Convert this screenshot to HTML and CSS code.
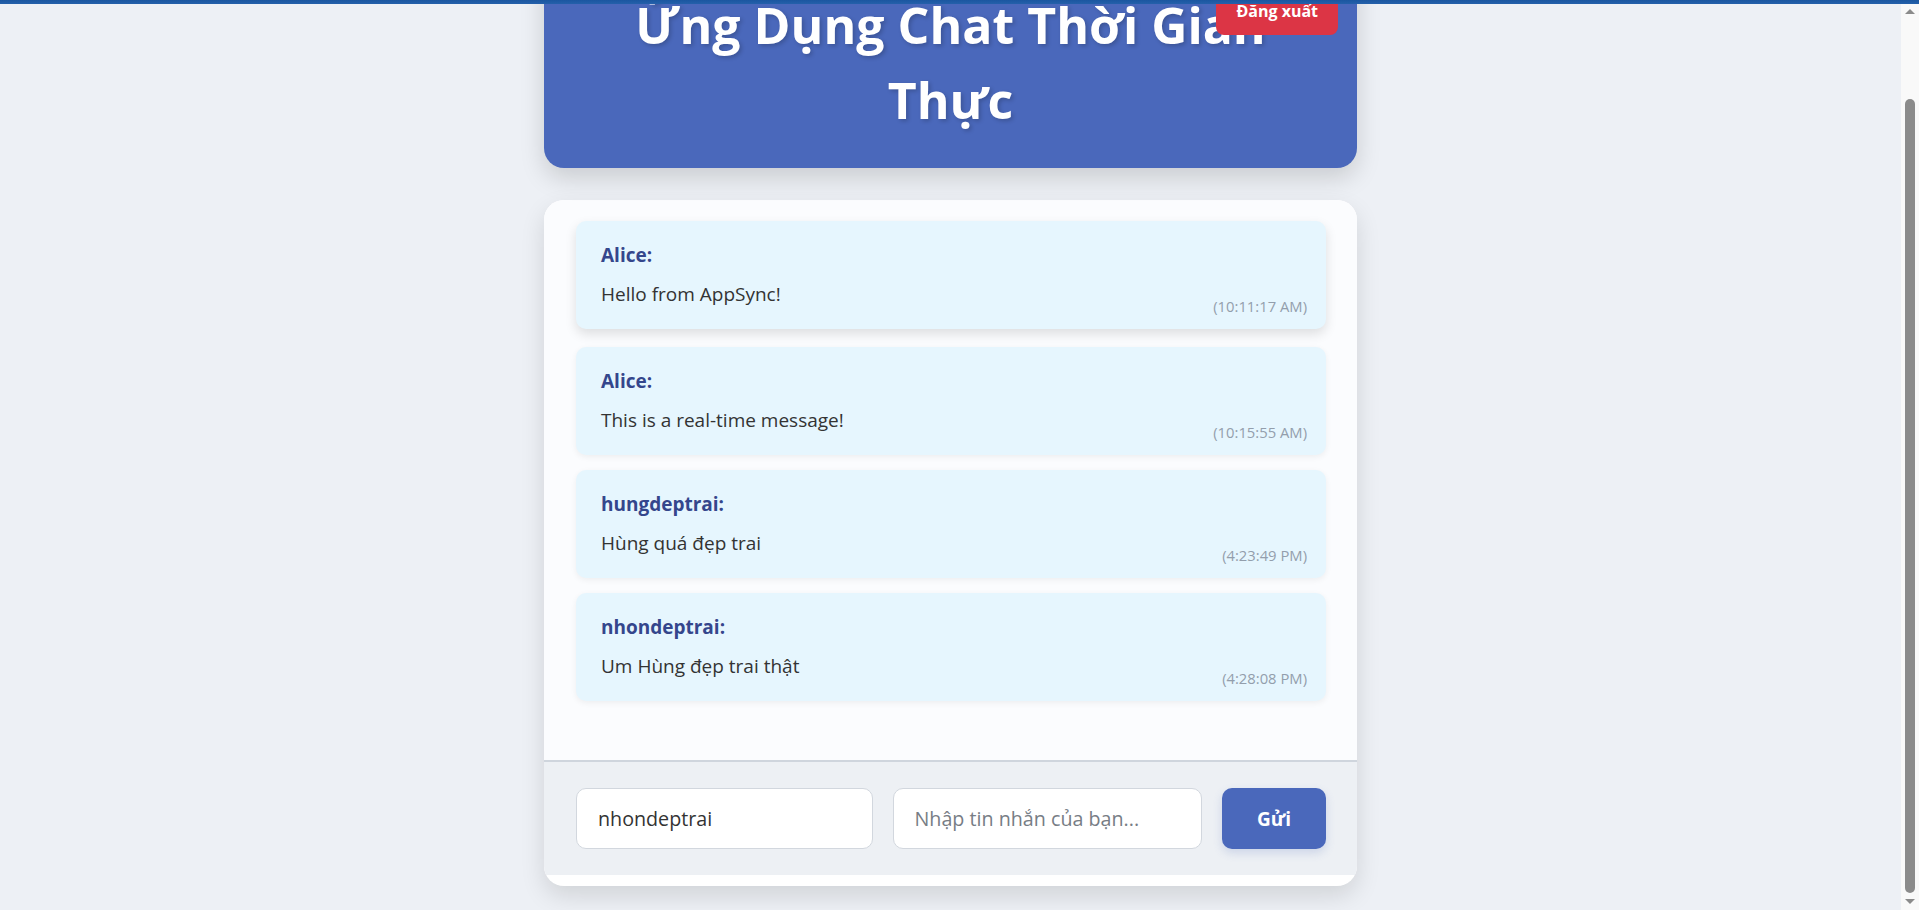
FILE: index.html
```html
<!DOCTYPE html>
<html lang="vi">
<head>
<meta charset="utf-8">
<title>Ứng Dụng Chat Thời Gian Thực</title>
<link rel="stylesheet" href="styles.css">
</head>
<body>
<div class="topbar"></div>
<div class="scrollbar" aria-hidden="true">
  <div class="scrollbar-arrow scrollbar-arrow-up"></div>
  <div class="scrollbar-track"><div class="scrollbar-thumb"></div></div>
  <div class="scrollbar-arrow scrollbar-arrow-down"></div>
</div>
<div class="app">
  <header class="app-header">
    <h1 class="app-title">Ứng Dụng Chat Thời Gian Thực</h1>
    <button class="logout-btn" type="button">Đăng xuất</button>
  </header>
  <main class="chat-card">
    <div class="message-list">
      <div class="message is-hover">
        <strong class="message-author">Alice:</strong>
        <div class="message-row">
          <p class="message-text">Hello from AppSync!</p>
          <span class="message-time">(10:11:17 AM)</span>
        </div>
      </div>
      <div class="message">
        <strong class="message-author">Alice:</strong>
        <div class="message-row">
          <p class="message-text">This is a real-time message!</p>
          <span class="message-time">(10:15:55 AM)</span>
        </div>
      </div>
      <div class="message">
        <strong class="message-author">hungdeptrai:</strong>
        <div class="message-row">
          <p class="message-text">Hùng quá đẹp trai</p>
          <span class="message-time">(4:23:49 PM)</span>
        </div>
      </div>
      <div class="message">
        <strong class="message-author">nhondeptrai:</strong>
        <div class="message-row">
          <p class="message-text">Um Hùng đẹp trai thật</p>
          <span class="message-time">(4:28:08 PM)</span>
        </div>
      </div>
    </div>
    <form class="composer">
      <input class="field" type="text" value="nhondeptrai">
      <input class="field" type="text" placeholder="Nhập tin nhắn của bạn...">
      <button class="send-btn" type="button">Gửi</button>
    </form>
  </main>
</div>
<script src="script.js"></script>
</body>
</html>
```

FILE: styles.css
```css
html {
  background: #edf0f5;
  scrollbar-width: none;
}

html::-webkit-scrollbar {
  width: 0;
  height: 0;
}

body {
  margin: 0;
  padding-right: 18px;
  background: #edf0f5;
  font-family: "Open Sans", "Noto Sans", sans-serif;
  color: #333;
}

.topbar {
  position: fixed;
  top: 0;
  left: 0;
  right: 0;
  height: 4px;
  background: linear-gradient(#1a56a0, #2460aa);
  z-index: 10;
}

.scrollbar {
  position: fixed;
  top: 0;
  right: 0;
  bottom: 0;
  width: 18px;
  background: #f9f9f9;
  display: flex;
  flex-direction: column;
  z-index: 5;
}

.scrollbar-arrow {
  height: 17px;
  display: flex;
  align-items: center;
  justify-content: center;
}

.scrollbar-arrow::before {
  content: "";
  width: 0;
  height: 0;
  border-left: 5px solid transparent;
  border-right: 5px solid transparent;
}

.scrollbar-arrow-up {
  padding-top: 3px;
}

.scrollbar-arrow-up::before {
  border-bottom: 5px solid #8b8b8b;
}

.scrollbar-arrow-down::before {
  border-top: 5px solid #8b8b8b;
}

.scrollbar-track {
  flex: 1;
  display: flex;
  flex-direction: column;
  align-items: center;
  padding-top: 79px;
}

.scrollbar-thumb {
  flex: 1;
  width: 10px;
  border-radius: 5px;
  background: #8b8b8b;
}

.app {
  width: 813px;
  margin: 0 auto;
  padding: 50px 0 24px;
}

.app-header {
  position: relative;
  background: #4a68bb;
  border-radius: 20px;
  padding: 30px 60px;
  box-shadow: 0 10px 25px rgba(0, 0, 0, 0.15);
}

.app-title {
  margin: 0;
  color: #fff;
  font-size: 50px;
  font-weight: 700;
  line-height: 75px;
  text-align: center;
  text-shadow: 2px 2px 4px rgba(0, 0, 0, 0.2);
}

.logout-btn {
  position: absolute;
  top: 31px;
  right: 19px;
  border: 0;
  border-radius: 8px;
  padding: 10px 20px;
  background: #dc3545;
  color: #fff;
  font-family: inherit;
  font-size: 16px;
  font-weight: 700;
  line-height: 25.6px;
}

.chat-card {
  margin-top: 32px;
  background: #fff;
  border-radius: 20px;
  overflow: hidden;
  padding-bottom: 11px;
  box-shadow: 0 10px 25px rgba(0, 0, 0, 0.12);
}

.message-list {
  box-sizing: border-box;
  height: 562px;
  padding: 24px 31px 0 32px;
  background: #fbfcfe;
  border-bottom: 2px solid #cfd5dd;
  display: flex;
  flex-direction: column;
  gap: 15px;
}

.message {
  background: #e6f6fe;
  border-radius: 10px;
  padding: 20px 19px 13px 25px;
  box-shadow: 0 2px 6px rgba(0, 0, 0, 0.06);
}

.message.is-hover {
  transform: translateY(-3px);
  box-shadow: 0 5px 12px rgba(0, 0, 0, 0.12);
}

.message-author {
  display: block;
  color: #34468c;
  font-size: 19px;
  font-weight: 700;
  line-height: 29px;
  margin-bottom: 10px;
}

.message-row {
  display: flex;
  justify-content: space-between;
  align-items: flex-end;
}

.message-text {
  margin: 0 0 7px;
  font-size: 19px;
  line-height: 29px;
  color: #333;
}

.message-time {
  font-size: 14.8px;
  line-height: 20px;
  color: #939eac;
}

.composer {
  display: grid;
  grid-template-columns: 297fr 310fr auto;
  gap: 20px;
  padding: 26px 31px 26px 32px;
  background: #edf0f4;
}

.field {
  box-sizing: border-box;
  min-width: 0;
  height: 61px;
  padding: 0 21px;
  border: 1px solid #d2d7de;
  border-radius: 10px;
  background: #fff;
  font-family: inherit;
  font-size: 19.7px;
  color: #333;
  outline: none;
}

.field::placeholder {
  color: #777d85;
}

.send-btn {
  height: 61px;
  padding: 0 35px;
  border: 0;
  border-radius: 10px;
  background: #4a68bb;
  color: #fff;
  font-family: inherit;
  font-size: 19px;
  font-weight: 700;
  box-shadow: 0 4px 10px rgba(74, 104, 187, 0.2);
}
```

FILE: script.js
```js
function scrollToBottom() {
  window.scrollTo(0, document.documentElement.scrollHeight);
}
scrollToBottom();
window.addEventListener("load", scrollToBottom);
```
